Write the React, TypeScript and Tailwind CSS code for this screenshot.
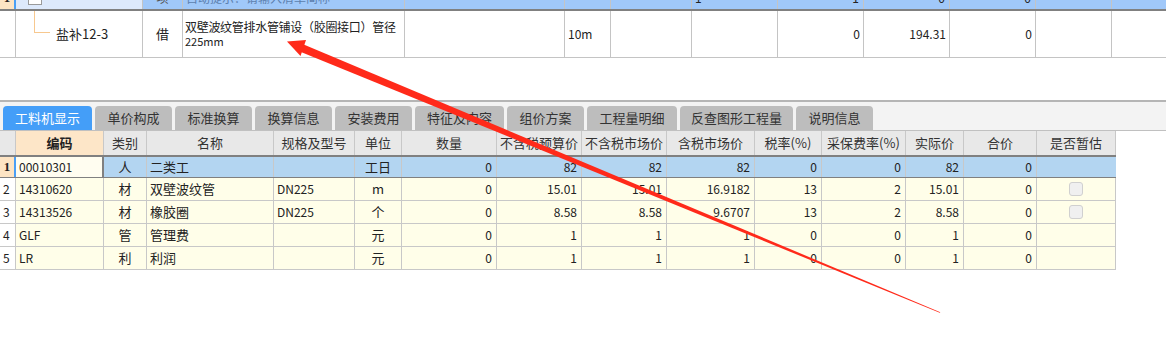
import React from "react";

const font = "font-['Noto_Sans_CJK_SC',sans-serif]";
const topGrid =
  "grid grid-cols-[16px_127px_40px_222px_160px_46px_81px_86px_86px_86px_86px_76px_54px]";
const botGrid =
  "grid grid-cols-[16px_88px_43px_127px_81px_47px_95px_85px_85px_88px_67px_84px_58px_73px_79px]";

const tabs = [
  { t: "工料机显示", w: "w-[89px]", active: true },
  { t: "单价构成", w: "w-[77px]" },
  { t: "标准换算", w: "w-[77px]" },
  { t: "换算信息", w: "w-[77px]" },
  { t: "安装费用", w: "w-[77px]" },
  { t: "特征及内容", w: "w-[89px]" },
  { t: "组价方案", w: "w-[77px]" },
  { t: "工程量明细", w: "w-[90px]" },
  { t: "反查图形工程量", w: "w-[113px]" },
  { t: "说明信息", w: "w-[77px]" },
];

const headers = [
  "编码",
  "类别",
  "名称",
  "规格及型号",
  "单位",
  "数量",
  "不含税预算价",
  "不含税市场价",
  "含税市场价",
  "税率(%)",
  "采保费率(%)",
  "实际价",
  "合价",
  "是否暂估",
];

type Row = { n: string; cells: string[]; check?: boolean };
const rows: Row[] = [
  { n: "1", cells: ["00010301", "人", "二类工", "", "工日", "0", "82", "82", "82", "0", "0", "82", "0"] },
  { n: "2", cells: ["14310620", "材", "双壁波纹管", "DN225", "m", "0", "15.01", "15.01", "16.9182", "13", "2", "15.01", "0"], check: true },
  { n: "3", cells: ["14313526", "材", "橡胶圈", "DN225", "个", "0", "8.58", "8.58", "9.6707", "13", "2", "8.58", "0"], check: true },
  { n: "4", cells: ["GLF", "管", "管理费", "", "元", "0", "1", "1", "1", "0", "0", "1", "0"] },
  { n: "5", cells: ["LR", "利", "利润", "", "元", "0", "1", "1", "1", "0", "0", "1", "0"] },
];

function align(i: number) {
  if (i === 1 || i === 4) return "justify-center";
  if (i === 0 || i === 2 || i === 3) return "justify-start pl-[3px]";
  return "justify-end pr-[4px]";
}

function Checkbox() {
  return <div className="w-[14px] h-[14px] rounded-[3px] bg-[#f0f0f0] border border-[#d0d0d0]" />;
}

export default function App() {
  return (
    <div className={`relative w-[1166px] h-[361px] bg-white overflow-hidden text-[12px] text-[#222] ${font}`}>
      {/* partial top row */}
      <div className="h-[11px] overflow-hidden">
        <div className={`${topGrid} h-[24px] -mt-[13px] border-b-2 border-[#808080]`}>
          <div className="bg-[#fde4c4] border-r-2 border-[#4a9ff5] flex items-center justify-center font-bold font-['Liberation_Serif',serif] text-[13px]">1</div>
          <div className="bg-[#dde9fb] border-r border-[#c4c4c4] flex items-center pl-[12px]">
            <div className="w-[14px] h-[14px] bg-white border border-[#9a9a9a]" />
          </div>
          <div className="bg-[#a0c8f9] border-r border-[#c4c4c4] flex items-center justify-center text-[#555]">项</div>
          <div className="bg-[#a0c8f9] border-r border-[#c4c4c4] flex items-center pl-[3px] text-[#5c7fae]">自动提示：请输入清单简称</div>
          <div className="bg-[#a0c8f9] border-r border-[#c4c4c4]" />
          <div className="bg-[#a0c8f9] border-r border-[#c4c4c4]" />
          <div className="bg-[#a0c8f9] border-r border-[#c4c4c4]" />
          <div className="bg-[#a0c8f9] border-r border-[#c4c4c4] flex items-center pl-[3px]">1</div>
          <div className="bg-[#a0c8f9] border-r border-[#c4c4c4] flex items-center justify-end pr-[4px]">1</div>
          <div className="bg-[#a0c8f9] border-r border-[#c4c4c4] flex items-center justify-end pr-[4px]">0</div>
          <div className="bg-[#a0c8f9] border-r border-[#c4c4c4] flex items-center justify-end pr-[4px]">0</div>
          <div className="bg-[#a0c8f9] border-r border-[#c4c4c4]" />
          <div className="bg-[#a0c8f9]" />
        </div>
      </div>

      {/* second row */}
      <div className={`${topGrid} h-[47px] border-b border-[#c4c4c4]`}>
        <div className="border-r border-[#c4c4c4]" />
        <div className="border-r border-[#c4c4c4] relative flex items-center">
          <div className="absolute left-[18px] top-0 h-[22px] w-[16px] border-l border-b border-[#f7c88f]" />
          <span className="ml-[40px] text-[13px]">盐补12-3</span>
        </div>
        <div className="border-r border-[#c4c4c4] flex items-center justify-center text-[13px]">借</div>
        <div className="border-r border-[#c4c4c4] flex flex-col justify-center pl-[2px] leading-[15px]">
          <div className="whitespace-nowrap text-[12px] tracking-[-0.3px]">双壁波纹管排水管铺设（胶圈接口）管径</div>
          <div className="whitespace-nowrap text-[11px]">225mm</div>
        </div>
        <div className="border-r border-[#c4c4c4]" />
        <div className="border-r border-[#c4c4c4] flex items-center pl-[3px]">10m</div>
        <div className="border-r border-[#c4c4c4]" />
        <div className="border-r border-[#c4c4c4]" />
        <div className="border-r border-[#c4c4c4] flex items-center justify-end pr-[3px]">0</div>
        <div className="border-r border-[#c4c4c4] flex items-center justify-end pr-[3px]">194.31</div>
        <div className="border-r border-[#c4c4c4] flex items-center justify-end pr-[3px]">0</div>
        <div className="border-r border-[#c4c4c4]" />
        <div />
      </div>

      {/* blank area */}
      <div className="h-[42px]" />

      {/* tab strip */}
      <div className="h-[31px] border-t-2 border-[#b5b5b5] bg-[#f3f3f3] flex items-end gap-[3px] pl-[3px] border-b border-b-[#c0c0c0]">
        {tabs.map((t) => (
          <div
            key={t.t}
            className={`${t.w} h-[24px] rounded-t-[4px] flex items-center justify-center text-[13px] ${
              t.active ? "bg-[#449ef8] text-white" : "bg-[#bdbdbd] text-[#333]"
            }`}
          >
            {t.t}
          </div>
        ))}
      </div>

      {/* header */}
      <div className={`${botGrid} w-[1116px] h-[24px]`}>
        <div className="bg-[#e8e8e8] border-r border-[#c8c8c8]" />
        {headers.map((h, i) => (
          <div
            key={h}
            className={`flex items-center justify-center text-[13px] border-r border-[#c8c8c8] whitespace-nowrap overflow-hidden ${
              i === 0 ? "bg-[#fde6c8] font-bold" : "bg-[#e8e8e8] text-[#333]"
            }`}
          >
            {h}
          </div>
        ))}
      </div>

      {/* rows */}
      {rows.map((r, ri) => {
        const sel = ri === 0;
        return (
          <div
            key={r.n}
            className={`${botGrid} w-[1116px] h-[23px] ${
              sel ? "border-y-2 border-[#808080] border-r-2" : "border-b border-[#c8c8c8]"
            }`}
          >
            <div
              className={`flex items-center ${
                sel
                  ? "bg-[#fde4c4] justify-center font-bold font-['Liberation_Serif',serif] text-[13px] border-r-2 border-[#4a9ff5]"
                  : "bg-white pl-[3px] border-r border-[#c8c8c8] text-[12px]"
              }`}
            >
              {r.n}
            </div>
            {r.cells.map((c, i) => (
              <div
                key={i}
                className={`flex items-center whitespace-nowrap ${align(i)} ${
                  sel
                    ? i === 0
                      ? "bg-[#fffdf0] border-r-2 border-[#808080]"
                      : "bg-[#b3d5f1] border-r border-[#c8c8c8]"
                    : "bg-[#fffee9] border-r border-[#c8c8c8]"
                } ${i === 1 || i === 2 || i === 4 ? "text-[13px]" : ""}`}
              >
                {c}
              </div>
            ))}
            <div className={`flex items-center justify-center ${sel ? "bg-[#b3d5f1]" : "bg-[#fffee9] border-r border-[#c8c8c8]"}`}>
              {r.check ? <Checkbox /> : null}
            </div>
          </div>
        );
      })}

      {/* red annotation arrow */}
      <svg className="absolute left-0 top-0 pointer-events-none" width="1166" height="361" viewBox="0 0 1166 361">
        <polygon points="298.5,51 302.5,44 940.3,312.2 939.7,312.8" fill="#ff2a1a" />
        <polygon points="287,41.5 306,40 300.5,56" fill="#ff2a1a" />
      </svg>
    </div>
  );
}
